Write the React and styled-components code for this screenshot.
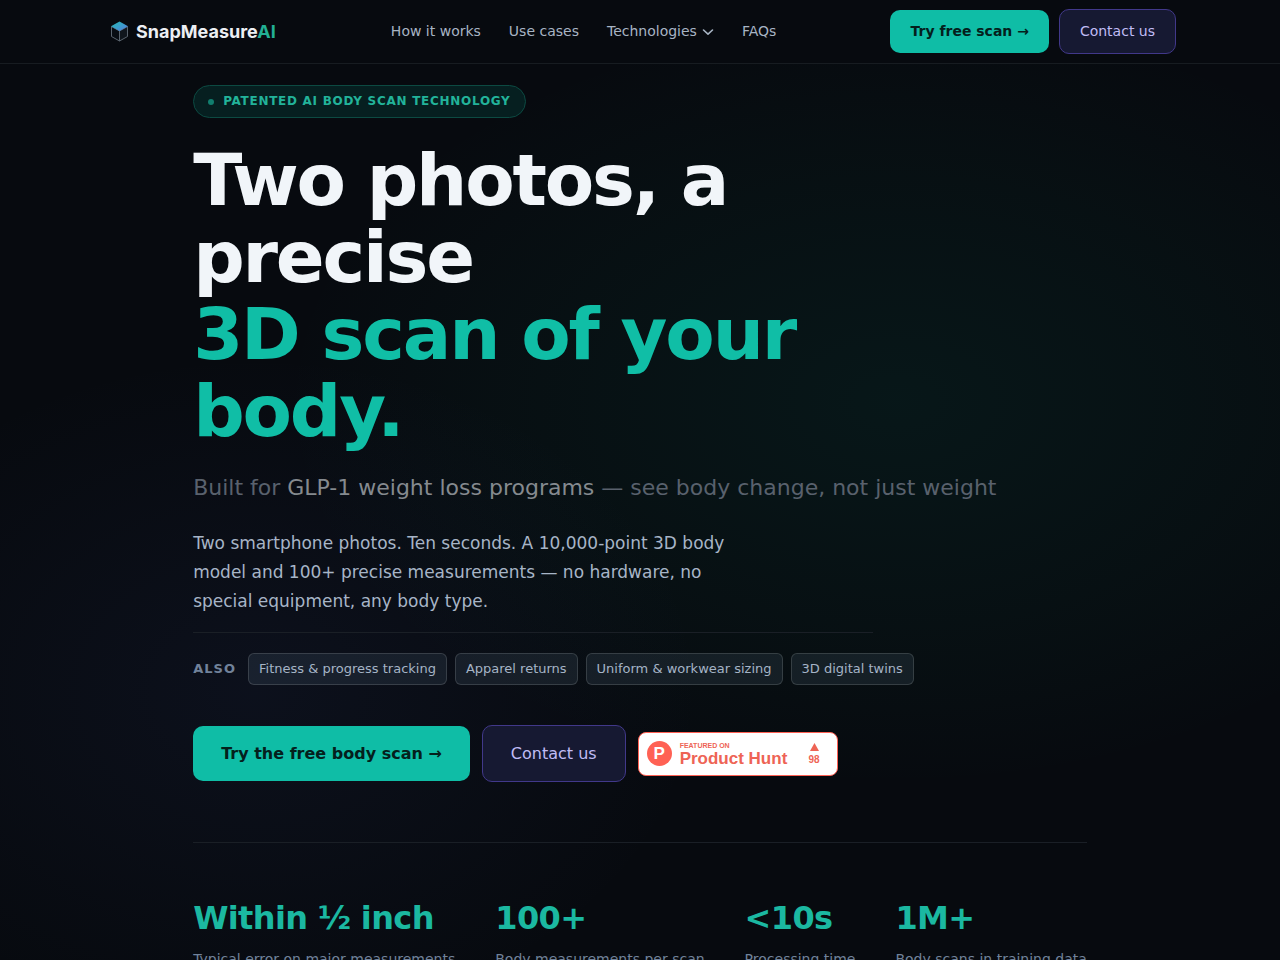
import React from 'react';
import styled, { createGlobalStyle, css } from 'styled-components';

const GlobalStyle = createGlobalStyle`
  * {
    box-sizing: border-box;
  }

  html {
    scrollbar-width: none;
  }

  body {
    margin: 0;
    background: #070a0f;
    color: #f1f5f9;
    font-family: 'DejaVu Sans', sans-serif;
    overflow-x: hidden;
  }
`;

const Header = styled.header`
  height: 64px;
  background: #070a0f;
  border-bottom: 1px solid #171c21;
`;

const HeaderInner = styled.div`
  max-width: 1120px;
  height: 100%;
  margin: 0 auto;
  padding: 0 24px;
  display: flex;
  align-items: center;
  justify-content: space-between;
`;

const Logo = styled.a`
  display: flex;
  align-items: center;
  gap: 7px;
  padding: 0 1px 0 6px;
  color: #eceff3;
  font-family: Inter, sans-serif;
  font-size: 18px;
  font-weight: 700;
  line-height: 24px;
  text-decoration: none;

  span span {
    color: #22b094;
  }
`;

const Nav = styled.nav`
  display: flex;
  align-items: center;
  gap: 28px;
`;

const NavLink = styled.a`
  display: flex;
  align-items: center;
  gap: 5px;
  color: #a7b4c4;
  font-size: 14px;
  line-height: 23px;
  text-decoration: none;
`;

const Actions = styled.div`
  display: flex;
  align-items: center;
  gap: ${props => (props.$large ? '12px' : '10px')};
`;

const Button = styled.a`
  border-radius: 10px;
  padding: 10px 20px;
  font-size: 14px;
  line-height: 23px;
  text-decoration: none;
  white-space: nowrap;

  ${props => props.$large && css`
    padding: 15px 28px;
    font-size: 16px;
    line-height: 25px;
  `}
`;

const PrimaryButton = styled(Button)`
  background: #0fbda6;
  color: #04201c;
  font-weight: 700;
`;

const OutlineButton = styled(Button)`
  background: #161932;
  border: 1px solid #41388a;
  color: #c0bcf5;
`;

const Hero = styled.main`
  min-height: calc(100vh - 64px);
  padding: 21px 24px 60px;
  background:
    radial-gradient(ellipse 60% 50% at 70% 35%, rgba(0, 190, 150, 0.07), rgba(16, 185, 129, 0.03) 50%, transparent 80%),
    radial-gradient(ellipse 50% 50% at 20% 65%, rgba(79, 100, 200, 0.07), transparent 70%);
`;

const HeroInner = styled.div`
  width: fit-content;
  margin: 0 auto;
`;

const Pill = styled.div`
  width: fit-content;
  display: flex;
  align-items: center;
  gap: 9px;
  margin-bottom: 24px;
  padding: 6px 14px;
  border: 1px solid #0c4a42;
  border-radius: 17px;
  background: #061f20;
  color: #22b39a;
  font-size: 12px;
  font-weight: 700;
  line-height: 19px;
  letter-spacing: 0.06em;

  &::before {
    content: '';
    width: 6px;
    height: 6px;
    border-radius: 50%;
    background: #117e6e;
  }
`;

const Title = styled.h1`
  max-width: 680px;
  margin: 0 0 20px;
  font-size: 72px;
  font-weight: 700;
  line-height: 77px;
  letter-spacing: -0.03em;

  span {
    display: block;
    color: #10bea6;
  }
`;

const Subtitle = styled.p`
  margin: 0 0 24px;
  color: #59616d;
  font-size: 22px;
  line-height: 35px;

  strong {
    color: #858a8f;
    font-weight: 400;
  }
`;

const Lead = styled.p`
  max-width: 560px;
  margin: 0 0 16px;
  color: #a7b5c7;
  font-size: 17px;
  line-height: 29px;
`;

const Divider = styled.hr`
  max-width: ${props => props.$width || 'none'};
  height: 1px;
  margin: 0;
  border: 0;
  background: #1a1f26;
`;

const AlsoRow = styled.div`
  display: flex;
  align-items: center;
  gap: 12px;
  margin: 20px 0 40px;
  font-size: 13px;
  line-height: 20px;
`;

const AlsoLabel = styled.span`
  color: #71829a;
  font-weight: 700;
  letter-spacing: 0.08em;
`;

const Chips = styled.ul`
  display: flex;
  gap: 8px;
  margin: 0;
  padding: 0;
  list-style: none;
`;

const Chip = styled.li`
  padding: 5px 10px;
  border: 1px solid rgba(255, 255, 255, 0.14);
  border-radius: 6px;
  background: rgba(148, 190, 215, 0.1);
  color: #a5b4c6;
  white-space: nowrap;
`;

const HuntBadge = styled.a`
  display: flex;
  align-items: center;
  gap: 8px;
  width: 200px;
  height: 44px;
  padding: 0 17px 0 8px;
  border: 1px solid #ff6154;
  border-radius: 8px;
  background: #fff;
  color: #ee6455;
  font-family: 'Liberation Sans', sans-serif;
  font-weight: 700;
  text-decoration: none;
`;

const HuntMark = styled.span`
  width: 25px;
  height: 25px;
  border-radius: 50%;
  background: #ff6154;
  color: #fff;
  font-size: 17px;
  line-height: 26px;
  text-align: center;
`;

const HuntText = styled.span`
  flex: 1;
  display: flex;
  flex-direction: column;
  padding-top: 2px;
  font-size: 17px;
  line-height: 17px;
  white-space: nowrap;

  small {
    font-size: 7px;
    line-height: 8px;
  }
`;

const HuntVotes = styled.span`
  display: flex;
  flex-direction: column;
  align-items: center;
  gap: 3px;
  padding-top: 2px;
  font-size: 10px;
  line-height: 12px;
`;

const StatsSection = styled.section`
  margin-top: 60px;
`;

const Stats = styled.dl`
  display: flex;
  gap: 40px;
  margin: 0;
  padding-top: 56px;
`;

const Stat = styled.div`
  display: flex;
  flex-direction: column-reverse;
  gap: 12px;
`;

const StatValue = styled.dd`
  margin: 0;
  color: #1bb8a1;
  font-size: 32px;
  font-weight: 700;
  line-height: 38px;
  letter-spacing: -0.02em;
`;

const StatLabel = styled.dt`
  color: #71829a;
  font-size: 14px;
  line-height: 20px;
  white-space: nowrap;
`;

const useCases = [
  'Fitness & progress tracking',
  'Apparel returns',
  'Uniform & workwear sizing',
  '3D digital twins',
];

const stats = [
  { value: 'Within ½ inch', label: 'Typical error on major measurements' },
  { value: '100+', label: 'Body measurements per scan' },
  { value: '<10s', label: 'Processing time' },
  { value: '1M+', label: 'Body scans in training data' },
];

const CubeIcon = () => (
  <svg width="19" height="22" viewBox="0 0 19 22" fill="none" aria-hidden="true">
    <defs>
      <linearGradient id="cubeTop" x1="0" y1="0" x2="1" y2="1">
        <stop offset="0" stopColor="#25b5b0" />
        <stop offset="0.5" stopColor="#3a9fcb" />
        <stop offset="1" stopColor="#5b74dc" />
      </linearGradient>
    </defs>
    <path d="M1.5 5.5 9.5 10V20L1.5 15.5z" fill="#080d13" stroke="#59636d" />
    <path d="M17.5 5.5 9.5 10V20l8-4.5z" fill="#10161d" stroke="#59636d" />
    <path d="M9.5 0.5 18 5.300 9.5 10 1 5.300z" fill="url(#cubeTop)" />
  </svg>
);

const Chevron = () => (
  <svg width="12" height="12" viewBox="0 0 12 12" fill="none" aria-hidden="true">
    <path d="M1.5 4 6 8.2 10.5 4" stroke="currentColor" strokeWidth="1.6" strokeLinecap="round" strokeLinejoin="round" />
  </svg>
);

const App = () => (
  <>
    <GlobalStyle />
    <Header>
      <HeaderInner>
        <Logo href="#">
          <CubeIcon />
          <span>SnapMeasure<span>AI</span></span>
        </Logo>
        <Nav>
          <NavLink href="#how">How it works</NavLink>
          <NavLink href="#use-cases">Use cases</NavLink>
          <NavLink href="#technologies">
            Technologies
            <Chevron />
          </NavLink>
          <NavLink href="#faqs">FAQs</NavLink>
        </Nav>
        <Actions>
          <PrimaryButton href="#scan">Try free scan →</PrimaryButton>
          <OutlineButton href="#contact">Contact us</OutlineButton>
        </Actions>
      </HeaderInner>
    </Header>

    <Hero>
      <HeroInner>
        <Pill>PATENTED AI BODY SCAN TECHNOLOGY</Pill>
        <Title>
          Two photos, a precise <span>3D scan of your body.</span>
        </Title>
        <Subtitle>
          Built for <strong>GLP-1 weight loss programs</strong> — see body change, not just weight
        </Subtitle>
        <Lead>
          Two smartphone photos. Ten seconds. A 10,000-point 3D body model and 100+ precise
          measurements — no hardware, no special equipment, any body type.
        </Lead>

        <Divider $width="680px" />
        <AlsoRow>
          <AlsoLabel>ALSO</AlsoLabel>
          <Chips>
            {useCases.map((name) => (
              <Chip key={name}>{name}</Chip>
            ))}
          </Chips>
        </AlsoRow>

        <Actions $large>
          <PrimaryButton $large href="#scan">Try the free body scan →</PrimaryButton>
          <OutlineButton $large href="#contact">Contact us</OutlineButton>
          <HuntBadge href="#product-hunt">
            <HuntMark>P</HuntMark>
            <HuntText>
              <small>FEATURED ON</small>
              Product Hunt
            </HuntText>
            <HuntVotes>
              <svg width="9" height="8" viewBox="0 0 9 8" aria-hidden="true">
                <path d="M4.5 0 9 8H0z" fill="#ee6455" />
              </svg>
              98
            </HuntVotes>
          </HuntBadge>
        </Actions>

        <StatsSection>
          <Divider />
          <Stats>
            {stats.map((stat) => (
              <Stat key={stat.label}>
                <StatLabel>{stat.label}</StatLabel>
                <StatValue>{stat.value}</StatValue>
              </Stat>
            ))}
          </Stats>
        </StatsSection>
      </HeroInner>
    </Hero>
  </>
);

export default App;
